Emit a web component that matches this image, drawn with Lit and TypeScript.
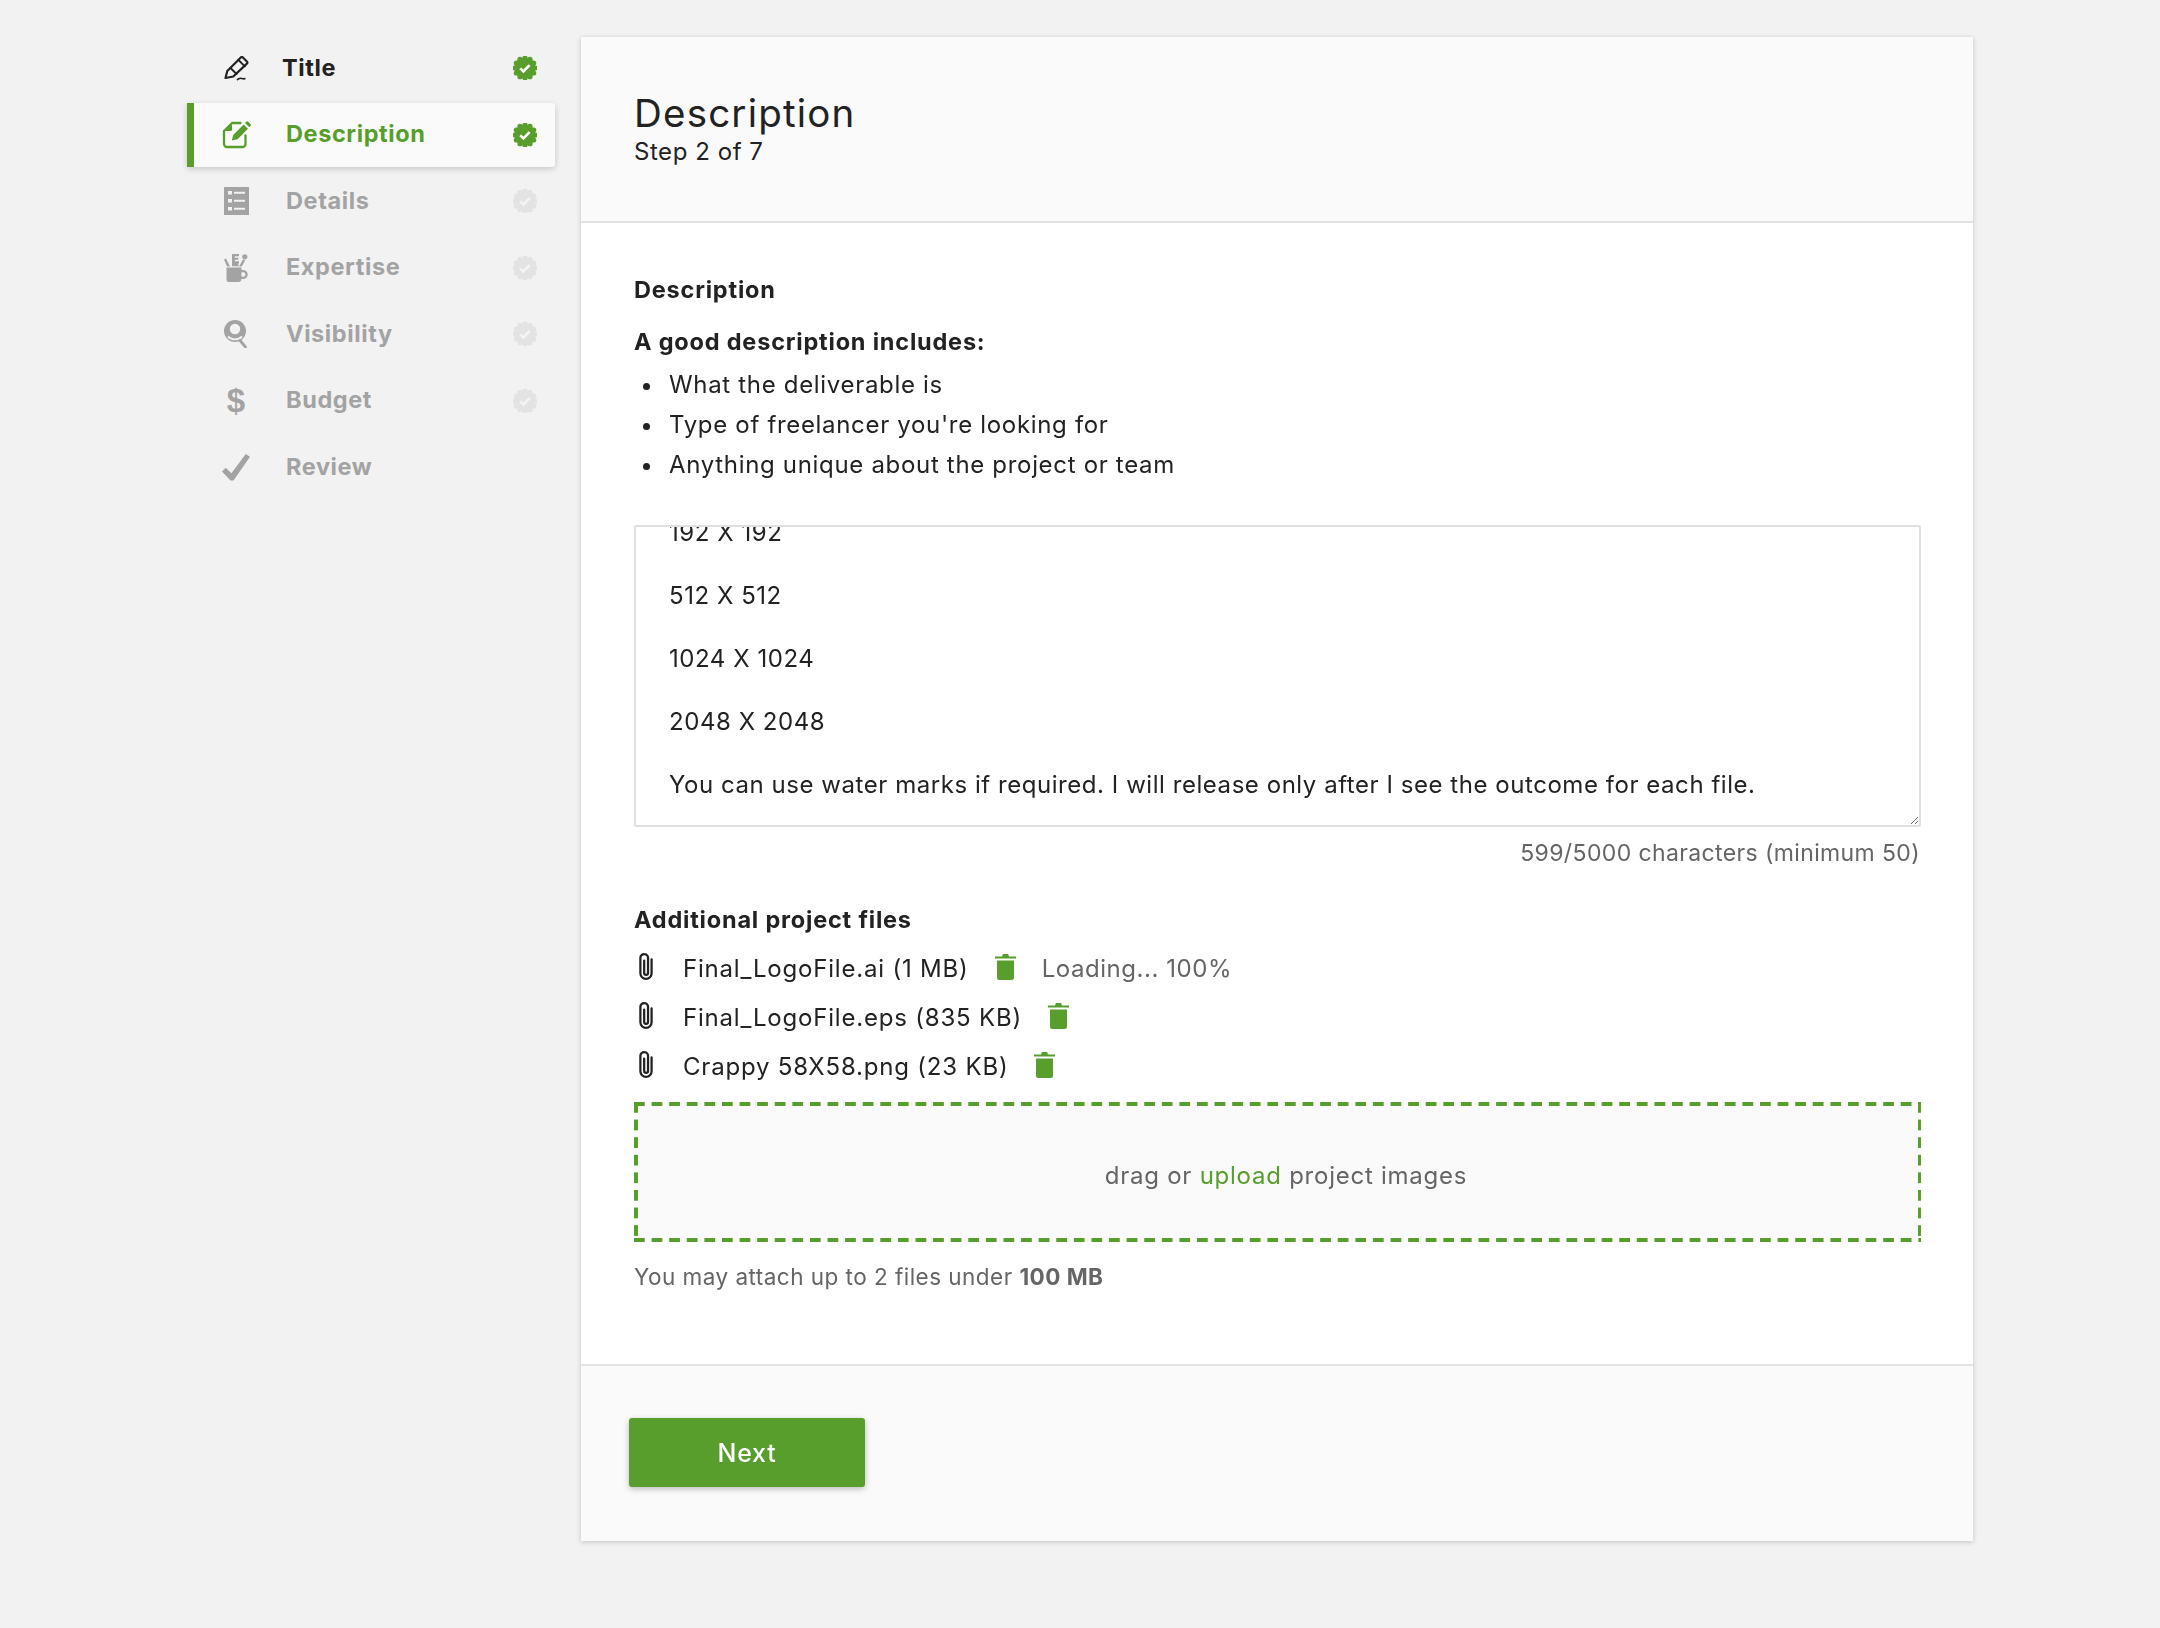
import { LitElement, html, css, svg, unsafeCSS } from "lit";
import { customElement } from "lit/decorators.js";

const GREEN = unsafeCSS("#589e2c");

const badge = (on: boolean) => {
  const n = 12;
  const bumps = Array.from({ length: n }, (_, i) => {
    const a = (i / n) * Math.PI * 2;
    return svg`<circle cx=${12 + Math.cos(a) * 10} cy=${12 + Math.sin(a) * 10} r="2.6"></circle>`;
  });
  return html`<svg class="badge ${on ? "on" : "off"}" width="24" height="24" viewBox="0 0 24 24">
    <circle cx="12" cy="12" r="10.5"></circle>${bumps}
    <path class="tick" d="M7.2 12.4l3.2 3 6.2-6.2" fill="none" stroke-width="2.6"></path>
  </svg>`;
};

const icons: Record<string, unknown> = {
  title: svg`<svg width="25" height="25" viewBox="0 0 25 25" fill="none" stroke="currentColor" stroke-width="2.2" stroke-linejoin="round" stroke-linecap="round"><path d="M1.500 22l1.800-7L16.800 1.500a1.500 1.500 0 0 1 2.100 0l4 4a1.500 1.500 0 0 1 0 2.100L9.300 20.500z"></path><path d="M14.500 4l6.300 6.300M6.500 12l6 6" stroke-width="1.900"></path><path d="M13.500 23.500c1.200-.6 2-1.500 3.500-1.200 1.200.2 2 .7 3.800.4" stroke-width="1.700"></path></svg>`,
  description: svg`<svg width="29" height="29" viewBox="0 0 29 29"><path d="M23.500 15.500V24a3 3 0 0 1-3 3H5a3 3 0 0 1-3-3V11l8-8h8.500" fill="none" stroke="currentColor" stroke-width="2.300" stroke-linejoin="round" stroke-linecap="round"></path><path d="M2.500 11h6a1.500 1.500 0 0 0 1.500-1.500V3z" fill="currentColor"></path><path d="M9.800 20.500l1.400-5.600L21.700 4.400l4.300 4.300-10.500 10.500zM23 3l1.300-1.300a1.300 1.300 0 0 1 1.800 0l2.400 2.400a1.300 1.300 0 0 1 0 1.800L27.300 7.200z" fill="currentColor"></path></svg>`,
  details: svg`<svg width="25" height="28" viewBox="0 0 25 28"><path fill-rule="evenodd" fill="currentColor" d="M0 0h25v28H0zM4 4v3.500h4V4zM10 4.800v2h11v-2zM4 12v3.500h4V12zM10 12.800v2h11v-2zM4 20v3.500h4V20zM10 20.800v2h11v-2z"></path></svg>`,
  expertise: svg`<svg width="24" height="28" viewBox="0 0 24 28" fill="currentColor"><path d="M2.500 13.500h15V16h1.700a4.500 4.500 0 0 1 0 9h-1.800a3 3 0 0 1-2.900 3H5a2.500 2.500 0 0 1-2.500-2.500zM17.500 18.200v4.600h1.700a2.300 2.300 0 0 0 0-4.600z" fill-rule="evenodd"></path><path d="M0 5.500l2-1 4 8h-3zM8 0h7v2.200h-4.200v1.500h3.500v2h-3.500v1.600h4.200v2h-.5v3h-6.500zM19 5.500l2.200.9-3.500 6.100h-2.700z"></path><circle cx="20.800" cy="2.800" r="2.600"></circle></svg>`,
  visibility: svg`<svg width="24" height="28" viewBox="0 0 24 28"><circle cx="11" cy="11" r="11" fill="currentColor"></circle><circle cx="11" cy="9" r="5.200" fill="#f2f2f2"></circle><path d="M4 16.500c2 2 4.400 2.900 7 2.900s5-.9 7-2.900" fill="none" stroke="#f2f2f2" stroke-width="1.800"></path><path d="M16 20.500l5.500 6.500" stroke="currentColor" stroke-width="2.800" stroke-linecap="round" fill="none"></path></svg>`,
  review: svg`<svg width="28" height="27" viewBox="0 0 28 27"><path fill="currentColor" d="M0 17.500l3.700-3.700 5.700 5.500L23.800 0 28 2.800 11.500 26.500h-3z"></path></svg>`,
};

const trash = svg`<svg class="trash" width="21" height="27" viewBox="0 0 21 27"><path fill="currentColor" d="M0 3.600h7L7.900 1h5.200l.9 2.600h7v2H0zM2 7.500h17V24.500a2.500 2.500 0 0 1-2.500 2.500h-12A2.500 2.500 0 0 1 2 24.500z"></path></svg>`;
const clip = svg`<svg class="clip" width="14" height="28" viewBox="0 0 13 26"><path fill="none" stroke="currentColor" stroke-width="2.100" stroke-linecap="round" d="M4.800 7v11.500a1.800 1.800 0 0 0 3.600 0V4.500a3.400 3.400 0 0 0-3.400-3.400 3.400 3.400 0 0 0-3.700 3.400v14.300a5.200 5.200 0 0 0 10.400 0V6"></path></svg>`;

const steps = [
  { id: "title", label: "Title", state: "done" },
  { id: "description", label: "Description", state: "active" },
  { id: "details", label: "Details", state: "todo" },
  { id: "expertise", label: "Expertise", state: "todo" },
  { id: "visibility", label: "Visibility", state: "todo" },
  { id: "budget", label: "Budget", state: "todo" },
  { id: "review", label: "Review", state: "none" },
];

const files = [
  { name: "Final_LogoFile.ai (1 MB)", note: "Loading... 100%" },
  { name: "Final_LogoFile.eps (835 KB)", note: "" },
  { name: "Crappy 58X58.png (23 KB)", note: "" },
];

const body = `144 X 144

192 X 192

512 X 512

1024 X 1024

2048 X 2048

You can use water marks if required. I will release only after I see the outcome for each file.`;

@customElement("app-root")
export class AppRoot extends LitElement {
  static styles = css`
    :host {
      display: block;
      width: 2160px;
      height: 1628px;
      background: #f2f2f2;
      font-family: Inter, "Liberation Sans", sans-serif;
      font-size: 24px;
      letter-spacing: 0.55px;
      color: #222;
      overflow: hidden;
    }
    * { box-sizing: border-box; }
    .page {
      display: flex;
      gap: 26px;
      padding: 37px 0 0 187px;
    }
    .side {
      width: 368px;
      margin-top: -1px;
      display: flex;
      flex-direction: column;
      gap: 2.5px;
    }
    .step {
      height: 64px;
      display: flex;
      align-items: center;
      padding: 0 18px 0 33px;
      font-weight: 700;
      font-size: 23.5px;
      letter-spacing: 0.6px;
      color: #a3a3a3;
      border-radius: 0 3px 3px 0;
    }
    .step .ic {
      width: 32px;
      display: flex;
      align-items: center;
      justify-content: center;
      margin-right: 34px;
    }
    .step .lab { flex: 1; margin-top: -2px; }
    .step.done { color: #222; }
    .step.done .ic { margin-right: 30px; }
    .step.active {
      color: ${GREEN};
      background: #fafafa;
      border-left: 7px solid ${GREEN};
      padding-left: 26px;
      box-shadow: 0 2px 6px rgba(0, 0, 0, 0.18);
    }
    .dollar { font-size: 33px; font-family: "Liberation Sans", sans-serif; letter-spacing: 0; line-height: 1; font-weight: 700; }
    .badge.on { fill: ${GREEN}; }
    .badge.off { fill: #e3e3e3; }
    .badge .tick { stroke: #fff; }
    .badge.off .tick { stroke: #f4f4f4; }

    .card {
      width: 1392px;
      height: 1504px;
      background: #fff;
      box-shadow: 0 1px 5px rgba(0, 0, 0, 0.2);
      display: flex;
      flex-direction: column;
    }
    .head {
      height: 186px;
      background: #fafafa;
      border-bottom: 2px solid #e2e2e2;
      padding: 53px 53px 0;
    }
    h1 {
      margin: 0;
      font-size: 38.5px;
      font-weight: 400;
      line-height: 46px;
      letter-spacing: 1.2px;
    }
    .sub { line-height: 32px; font-size: 24px; }
    .main {
      flex: 1;
      padding: 50.5px 53px 0;
    }
    .b { font-weight: 700; line-height: 32px; font-size: 23.5px; letter-spacing: 0.8px; }
    .lead { margin-top: 20px; }
    ul {
      margin: 7px 0 0;
      padding: 0;
      list-style: none;
    }
    li {
      height: 40px;
      line-height: 40px;
      padding-left: 35px;
      position: relative;
      letter-spacing: 0.68px;
    }
    li::before {
      content: "";
      position: absolute;
      left: 9px;
      top: 18px;
      width: 7px;
      height: 7px;
      border-radius: 50%;
      background: #222;
    }
    textarea {
      display: block;
      width: 1287px;
      height: 302px;
      margin-top: 40px;
      border: 2px solid #e0e0e0;
      border-radius: 2px;
      padding: 0 33px 24px;
      font: inherit;
      letter-spacing: inherit;
      line-height: 31.5px;
      color: #222;
      resize: both;
      outline: none;
      scrollbar-width: none;
      background: #fff;
    }
    .count {
      text-align: right;
      color: #656565;
      margin-top: 12px;
      line-height: 28px;
      font-size: 23px;
      letter-spacing: 0.38px;
    }
    .files-h { margin-top: 37px; }
    .files { margin-top: 8px; display: flex; flex-direction: column; }
    .file {
      height: 49px;
      display: flex;
      align-items: center;
      letter-spacing: 0.8px;
    }
    .clip { margin-right: 30px; margin-left: 5px; color: #222; flex: none; margin-top: -2px; }
    .trash { color: ${GREEN}; margin-left: 26px; flex: none; margin-top: -3px; }
    .note { color: #656565; margin-left: 26px; letter-spacing: 0.55px; }
    .drop {
      margin-top: 11px;
      height: 140px;
      width: 1287px;
      background:
        linear-gradient(to right, ${GREEN} 11px, transparent 11px) 0 0 / 17.6px 3.5px repeat-x,
        linear-gradient(to right, ${GREEN} 11px, transparent 11px) 0 100% / 17.6px 3.5px repeat-x,
        linear-gradient(to bottom, ${GREEN} 11px, transparent 11px) 0 0 / 3.5px 17.6px repeat-y,
        linear-gradient(to bottom, ${GREEN} 11px, transparent 11px) 100% 0 / 3.5px 17.6px repeat-y,
        #fafafa;
      display: flex;
      align-items: center;
      justify-content: center;
      color: #656565;
      padding: 7px 0 0 17px;
      letter-spacing: 0.75px;
    }
    .drop a { color: ${GREEN}; text-decoration: none; }
    .limit {
      margin-top: 21px;
      color: #656565;
      line-height: 28px;
      font-size: 22.5px;
      letter-spacing: 0.47px;
    }
    .limit b { font-weight: 700; }
    .foot {
      height: 177px;
      background: #fafafa;
      border-top: 2px solid #e2e2e2;
      padding: 52px 0 0 48px;
    }
    button {
      width: 236px;
      height: 69px;
      background: ${GREEN};
      color: #fff;
      border: none;
      border-radius: 3px;
      font: inherit;
      font-weight: 500;
      font-size: 25px;
      letter-spacing: 0.8px;
      box-shadow: 0 2px 6px rgba(0, 0, 0, 0.25);
    }
  `;

  firstUpdated() {
    const t = this.renderRoot.querySelector("textarea");
    if (t) t.scrollTop = t.scrollHeight;
  }

  render() {
    return html`<div class="page">
      <nav class="side">
        ${steps.map(
          (s) => html`<div class="step ${s.state}">
            <span class="ic">${s.id === "budget" ? html`<span class="dollar">$</span>` : icons[s.id]}</span>
            <span class="lab">${s.label}</span>
            ${s.state === "none" ? "" : badge(s.state !== "todo")}
          </div>`
        )}
      </nav>
      <section class="card">
        <header class="head">
          <h1>Description</h1>
          <div class="sub">Step 2 of 7</div>
        </header>
        <div class="main">
          <div class="b">Description</div>
          <div class="b lead">A good description includes:</div>
          <ul>
            <li>What the deliverable is</li>
            <li>Type of freelancer you're looking for</li>
            <li>Anything unique about the project or team</li>
          </ul>
          <textarea .value=${body}></textarea>
          <div class="count">599/5000 characters (minimum 50)</div>
          <div class="b files-h">Additional project files</div>
          <div class="files">
            ${files.map(
              (f) => html`<div class="file">
                ${clip}<span>${f.name}</span>${trash}
                ${f.note ? html`<span class="note">${f.note}</span>` : ""}
              </div>`
            )}
          </div>
          <div class="drop"><span>drag or <a>upload</a> project images</span></div>
          <div class="limit">You may attach up to 2 files under <b>100 MB</b></div>
        </div>
        <footer class="foot"><button>Next</button></footer>
      </section>
    </div>`;
  }
}
